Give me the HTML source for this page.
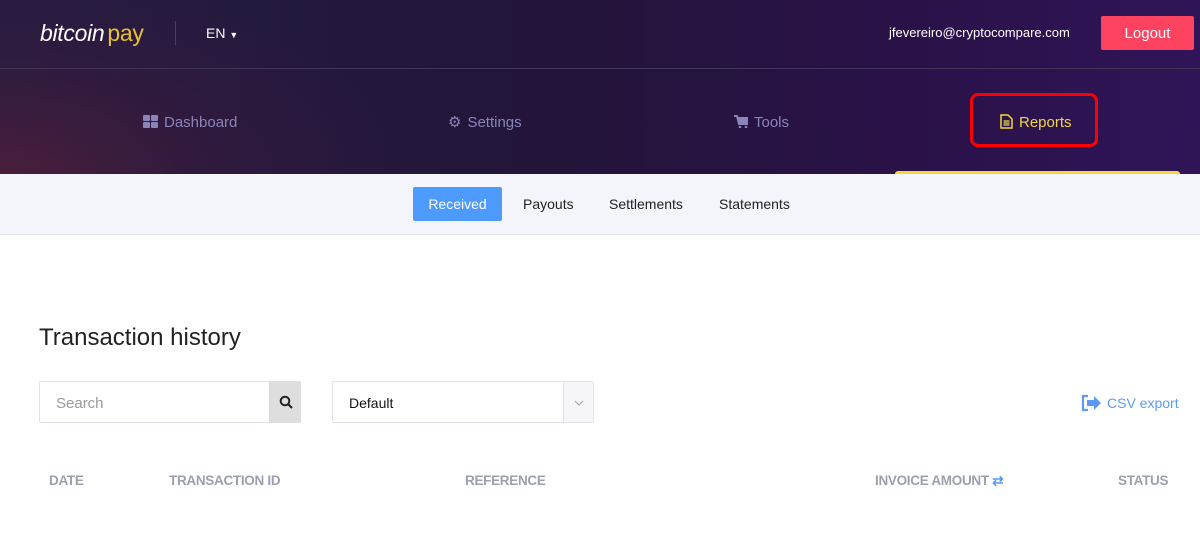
<!DOCTYPE html>
<html><head><meta charset="utf-8"><style>
*{margin:0;padding:0;box-sizing:border-box}
body{width:1200px;height:542px;overflow:hidden;background:#fff;font-family:"Liberation Sans",Arial,sans-serif;position:relative}
.hdr{position:absolute;left:0;top:0;width:1200px;height:174px;background:radial-gradient(ellipse 500px 260px at 0px 180px,#4a1e3c 0%,rgba(60,26,60,0.5) 40%,rgba(36,24,60,0) 80%),linear-gradient(90deg,#251d42 0%,#221539 45%,#2a1248 75%,#2f1457 100%)}
.line{position:absolute;top:68px;left:0;width:1200px;height:1px;background:#3e3558}
.abs{position:absolute}
.nav{color:#8a84b8;font-size:15px;top:113px}
.sub{position:absolute;top:174px;left:0;width:1200px;height:61px;background:#f4f5fa;border-bottom:1px solid #e3e4ea}
.tab{position:absolute;top:196px;font-size:14px;color:#222}
.th{position:absolute;top:473px;font-size:13.5px;font-weight:bold;color:#9aa0ad;letter-spacing:-0.3px}
</style></head><body>
<div class="hdr">
 <div class="abs" style="left:40px;top:20px;font-size:23px;font-style:italic;color:#fff;letter-spacing:-0.3px">bitcoin<span style="color:#e8c22a;font-style:normal;margin-left:3px">pay</span></div>
 <div class="abs" style="left:175px;top:21px;width:1px;height:24px;background:#45406a"></div>
 <div class="abs" style="left:206px;top:25px;font-size:14px;color:#fff">EN <span style="font-size:9px">▼</span></div>
 <div class="abs" style="left:889px;top:25px;font-size:13px;color:#fff">jfevereiro@cryptocompare.com</div>
 <div class="abs" style="left:1101px;top:16px;width:93px;height:34px;background:#fd4360;border-radius:2px;color:#fff;font-size:15px;text-align:center;line-height:36px">Logout</div>
 <div class="line"></div>
 <div class="abs nav" style="left:143px;top:114px"><svg width="15" height="13" style="vertical-align:-1px;margin-right:6px"><rect x="0" y="0" width="7" height="6" rx="1" fill="#8a84b8"/><rect x="8" y="0" width="7" height="6" rx="1" fill="#8a84b8"/><rect x="0" y="7" width="7" height="6" rx="1" fill="#8a84b8"/><rect x="8" y="7" width="7" height="6" rx="1" fill="#8a84b8"/></svg>Dashboard</div>
 <div class="abs nav" style="left:448px"><span style="margin-right:6px">⚙</span>Settings</div>
 <div class="abs nav" style="left:734px;top:114px"><svg width="14" height="13" style="vertical-align:-1px;margin-right:6px"><path d="M0 1h3l2 8h8l1-6H4" fill="none" stroke="#8a84b8" stroke-width="2"/><circle cx="6" cy="12" r="1.3" fill="#8a84b8"/><circle cx="12" cy="12" r="1.3" fill="#8a84b8"/><rect x="4" y="3" width="9" height="5" fill="#8a84b8"/></svg>Tools</div>
 <div class="abs" style="left:970px;top:93px;width:128px;height:54px;border:3px solid #f00;border-radius:8px"></div>
 <div class="abs nav" style="left:1000px;top:114px;color:#f0d83c"><svg width="13" height="15" style="vertical-align:-2px;margin-right:6px"><path d="M1 1h7l4 4v9H1z" fill="none" stroke="#f0d83c" stroke-width="1.5"/><path d="M3.5 7h6M3.5 9h6M3.5 11h6" stroke="#f0d83c" stroke-width="1.2"/></svg>Reports</div>
 <div class="abs" style="left:895px;top:171px;width:285px;height:4px;background:#f7d63a;border-radius:3px 3px 0 0"></div>
</div>
<div class="sub"></div>
<div class="abs" style="left:413px;top:187px;width:89px;height:34px;background:#4d9bff;border-radius:2px;color:#fff;font-size:14px;text-align:center;line-height:34px">Received</div>
<div class="tab" style="left:523px">Payouts</div>
<div class="tab" style="left:609px">Settlements</div>
<div class="tab" style="left:719px">Statements</div>
<div class="abs" style="left:39px;top:324px;font-size:24px;color:#222">Transaction history</div>
<div class="abs" style="left:39px;top:381px;width:262px;height:42px;border:1px solid #e2e3ea;border-radius:2px"></div>
<div class="abs" style="left:56px;top:395px;font-size:15px;color:#999">Search</div>
<div class="abs" style="left:269px;top:381px;width:32px;height:42px;background:#dedede;border-radius:0 2px 2px 0"><svg width="14" height="14" style="position:absolute;left:10px;top:14px"><circle cx="6" cy="6" r="4.3" fill="none" stroke="#222" stroke-width="2"/><path d="M9 9l4 4" stroke="#222" stroke-width="2.2"/></svg></div>
<div class="abs" style="left:332px;top:381px;width:262px;height:42px;border:1px solid #e2e3ea;border-radius:2px"></div>
<div class="abs" style="left:563px;top:382px;width:30px;height:40px;background:#f6f6f9;border-left:1px solid #e2e3ea"><svg width="10" height="6" style="position:absolute;left:10px;top:18px"><path d="M1 1l4 4 4-4" fill="none" stroke="#aaa" stroke-width="1.2"/></svg></div>
<div class="abs" style="left:349px;top:395px;font-size:14px;color:#111">Default</div>
<div class="abs" style="left:1081px;top:394px;font-size:14px;color:#5b9bf5"><svg width="21" height="18" style="vertical-align:-4px;margin-right:5px"><path d="M7 2H2v14h5" fill="none" stroke="#5b9bf5" stroke-width="2.2"/><path d="M6 6h7V2l7 7-7 7v-4H6z" fill="#5b9bf5"/></svg>CSV export</div>
<div class="th" style="left:49px">DATE</div>
<div class="th" style="left:169px">TRANSACTION ID</div>
<div class="th" style="left:465px">REFERENCE</div>
<div class="th" style="left:875px">INVOICE AMOUNT <span style="color:#5b9bf5">⇄</span></div>
<div class="th" style="left:1118px">STATUS</div>
</body></html>
